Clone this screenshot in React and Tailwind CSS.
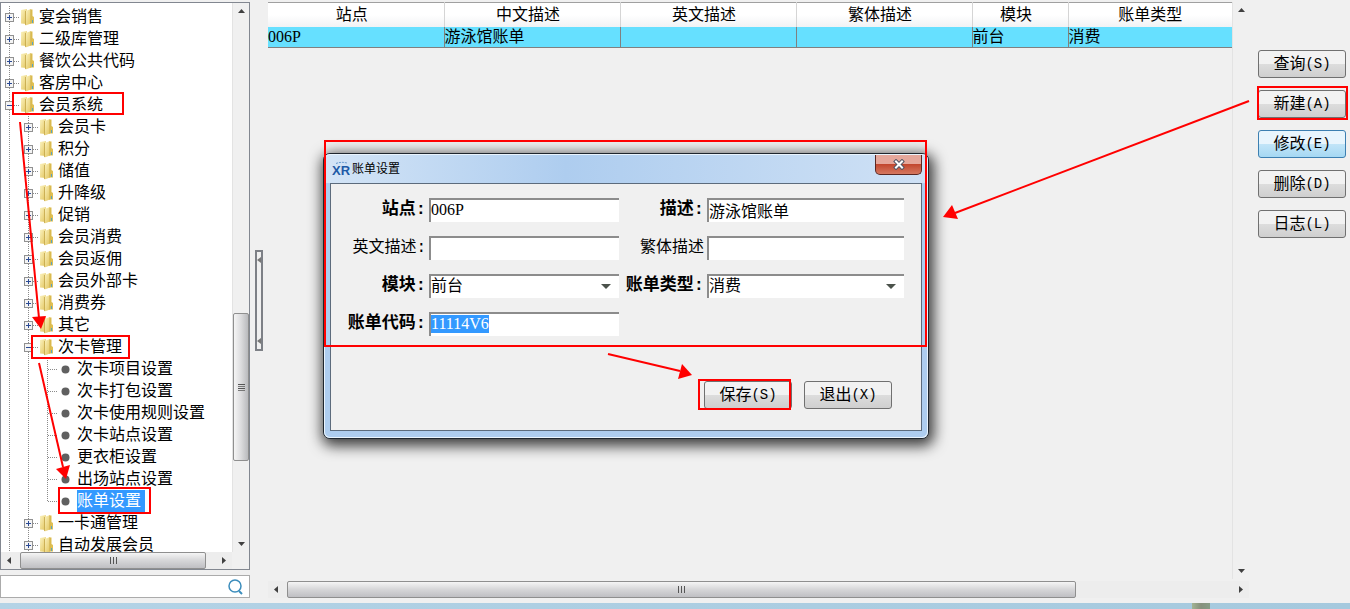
import { useEffect, useRef, useState } from "react";

const treeItems = [
  { level: 0, label: "宴会销售" },
  { level: 0, label: "二级库管理" },
  { level: 0, label: "餐饮公共代码" },
  { level: 0, label: "客房中心" },
  { level: 0, label: "会员系统", open: true },
  { level: 1, label: "会员卡" },
  { level: 1, label: "积分" },
  { level: 1, label: "储值" },
  { level: 1, label: "升降级" },
  { level: 1, label: "促销" },
  { level: 1, label: "会员消费" },
  { level: 1, label: "会员返佣" },
  { level: 1, label: "会员外部卡" },
  { level: 1, label: "消费券" },
  { level: 1, label: "其它" },
  { level: 1, label: "次卡管理", open: true },
  { level: 2, label: "次卡项目设置" },
  { level: 2, label: "次卡打包设置" },
  { level: 2, label: "次卡使用规则设置" },
  { level: 2, label: "次卡站点设置" },
  { level: 2, label: "更衣柜设置" },
  { level: 2, label: "出场站点设置" },
  { level: 2, label: "账单设置", last: true },
  { level: 1, label: "一卡通管理" },
  { level: 1, label: "自动发展会员" },
];

const columns = [
  { title: "站点", value: "006P", width: "w-[176px]" },
  { title: "中文描述", value: "游泳馆账单", width: "w-[176px]" },
  { title: "英文描述", value: "", width: "w-[176px]" },
  { title: "繁体描述", value: "", width: "w-[176px]" },
  { title: "模块", value: "前台", width: "w-[96px]" },
  { title: "账单类型", value: "消费", width: "" },
];

const actions = [
  { label: "查询", hotkey: "S" },
  { label: "新建", hotkey: "A" },
  { label: "修改", hotkey: "E", active: true },
  { label: "删除", hotkey: "D" },
  { label: "日志", hotkey: "L" },
];

function Guide({ type, last }) {
  return (
    <svg width="19" height="22" className="shrink-0" shapeRendering="crispEdges">
      <path
        d={last ? "M8.5 0V11" : "M8.5 0V22"}
        stroke="#8a8a8a"
        strokeDasharray="1 1"
      />
      {type !== "line" && (
        <path d="M9 11.5H19" stroke="#8a8a8a" strokeDasharray="1 1" />
      )}
      {(type === "plus" || type === "minus") && (
        <>
          <rect x="4.5" y="7.5" width="8" height="8" fill="#f4f4f4" stroke="#919191" />
          <path
            d={type === "plus" ? "M6 11.5H11M8.5 9V14" : "M6 11.5H11"}
            stroke="#2b4a94"
          />
        </>
      )}
    </svg>
  );
}

function FolderIcon() {
  return (
    <svg width="19" height="22" className="shrink-0">
      <defs>
        <linearGradient id="folder-front" x1="0" x2="1" y1="0" y2="1">
          <stop offset="0" stopColor="#fbf3c0" />
          <stop offset="1" stopColor="#e2c45c" />
        </linearGradient>
      </defs>
      <path d="M1 4L7 3V18L1 17.500Z" fill="url(#folder-front)" />
      <path d="M10 3.500H12.500V10L14 11V17.500H10Z" fill="#dfbf52" />
      <path d="M5.500 5L11 3V17.500L5.500 19.500Z" fill="url(#folder-front)" />
      <path d="M5.500 5V19" stroke="#c3a545" strokeWidth="0.800" />
      <path d="M10.800 3.500V17.500" stroke="#cdae4a" strokeWidth="0.800" />
      <rect x="12" y="14" width="1" height="3" fill="#58a5c4" />
    </svg>
  );
}

function TreeRow({ item, selected, onSelect }) {
  return (
    <li className="flex h-[22px] items-center">
      {item.level > 0 && <Guide type="line" />}
      {item.level > 1 && <Guide type="line" />}
      {item.level === 2 ? (
        <Guide type="leaf" last={item.last} />
      ) : (
        <Guide type={item.open ? "minus" : "plus"} />
      )}
      {item.level === 2 ? (
        <svg width="19" height="22" className="shrink-0">
          <circle cx="7.500" cy="11.500" r="4" fill="#606060" />
        </svg>
      ) : (
        <FolderIcon />
      )}
      <button
        type="button"
        onClick={onSelect}
        className={`h-[22px] shrink-0 whitespace-nowrap text-base leading-[22px] ${
          selected ? "bg-[#3399ff] pr-1 text-white" : "text-black"
        }`}
      >
        {item.label}
      </button>
    </li>
  );
}

function Arrow({ dir }) {
  const shapes = {
    up: "M5 10L8.500 6L12 10Z",
    down: "M5 7L8.500 11L12 7Z",
    left: "M10 5L6 8.500L10 12Z",
    right: "M7 5L11 8.500L7 12Z",
  };
  return (
    <svg width="17" height="17" className="shrink-0">
      <path d={shapes[dir]} fill="#404040" />
    </svg>
  );
}

function VerticalScroll({ thumb }) {
  return (
    <div className="flex w-[17px] shrink-0 flex-col items-stretch border-l border-[#e3e3e3] bg-[#f0f0f0]">
      <Arrow dir="up" />
      <div className="grow-[294] basis-0" />
      {thumb && (
        <div className="flex grow-[147] basis-0 flex-col items-center justify-center gap-px rounded-xs border border-[#8f8f8f] bg-linear-to-r from-[#f5f5f5] via-[#dcdcde] to-[#b9babd]">
          <div className="h-px w-[7px] bg-[#555]" />
          <div className="h-px w-[7px] bg-[#777]" />
          <div className="h-px w-[7px] bg-[#555]" />
          <div className="h-px w-[7px] bg-[#777]" />
        </div>
      )}
      <div className="grow-[74] basis-0" />
      <Arrow dir="down" />
    </div>
  );
}

function HorizontalScroll({ grow, rest }) {
  return (
    <div className="flex h-[17px] shrink-0 items-stretch bg-[#ededed]">
      <Arrow dir="left" />
      <div className="w-0.5" />
      <div
        className={`flex basis-0 items-center justify-center gap-0.5 rounded-xs border border-[#8f8f8f] bg-linear-to-b from-[#f5f5f5] via-[#d6d6d8] to-[#bfbfc3] ${grow}`}
      >
        <div className="h-[7px] w-px bg-[#555]" />
        <div className="h-[7px] w-px bg-[#555]" />
        <div className="h-[7px] w-px bg-[#555]" />
      </div>
      <div className={`basis-0 ${rest}`} />
      <Arrow dir="right" />
    </div>
  );
}

function PushButton({ label, hotkey, active, onClick }) {
  return (
    <button
      type="button"
      onClick={onClick}
      className={`flex h-7 w-[88px] items-center justify-center rounded-[3px] border text-base leading-none ${
        active
          ? "border-[#3c7fb1] bg-linear-to-b from-[#e8f5fd] from-50% via-[#c2e5f8] via-50% to-[#a5d8f3]"
          : "border-[#707070] bg-linear-to-b from-[#f2f2f2] from-50% via-[#dddddd] via-50% to-[#cfcfcf]"
      }`}
    >
      {label}
      <span className="font-['Liberation_Mono',monospace] text-sm leading-none">({hotkey})</span>
    </button>
  );
}

const labelClass =
  "text-right font-['Liberation_Mono','Noto_Sans_CJK_SC',monospace] leading-6 whitespace-nowrap";

const inputClass =
  "h-6 w-full appearance-none rounded-none border-t-2 border-l-2 border-t-[#8c8c8c] border-l-[#8c8c8c] bg-white pb-0.5 text-base leading-5 text-black outline-none selection:bg-[#3399ff] selection:text-white";

function Field({ id, label, bold, value, inputRef }) {
  return (
    <>
      <label htmlFor={id} className={`${labelClass} ${bold ? "text-[17px] font-bold" : "text-base"}`}>
        {label}
      </label>
      <input id={id} ref={inputRef} defaultValue={value} className={inputClass} />
    </>
  );
}

function SelectField({ id, label, value }) {
  return (
    <>
      <label htmlFor={id} className={`${labelClass} text-[17px] font-bold`}>
        {label}
      </label>
      <div className="relative">
        <select id={id} defaultValue={value} className={inputClass}>
          <option>{value}</option>
        </select>
        <svg width="10" height="6" className="pointer-events-none absolute top-2.5 right-2">
          <path d="M0 0H10L5 5Z" fill="#4b524b" />
        </svg>
      </div>
    </>
  );
}

function BillDialog() {
  const codeRef = useRef(null);

  useEffect(() => {
    codeRef.current.focus();
    codeRef.current.select();
  }, []);

  return (
    <div
      role="dialog"
      aria-labelledby="dialog-title"
      className="absolute top-[153px] left-[323px] w-[606px] rounded-[7px] border border-[#1f262e] bg-[#aecdef] shadow-[2px_4px_14px_3px_rgba(0,0,0,0.75)]"
    >
      <div className="flex h-[29px] items-center rounded-t-md border-x border-t border-[#eaf4fd] bg-linear-to-r from-[#d3e4f6] via-[#aecdef] via-40% to-[#cfe1f5] px-[5px]">
        <svg width="18" height="18" className="ml-0.5 shrink-0">
          <text
            x="0"
            y="15"
            fontFamily="Liberation Sans, sans-serif"
            fontSize="13"
            fontWeight="bold"
            fill="#1d5aa6"
          >
            XR
          </text>
          <path d="M4 3.500Q9 1.500 15 3" stroke="#5d93cb" strokeDasharray="2 1" fill="none" />
        </svg>
        <h1 id="dialog-title" className="ml-0.5 flex-1 text-xs">
          账单设置
        </h1>
        <button
          type="button"
          aria-label="关闭"
          className="flex h-5 w-[47px] items-center justify-center self-start rounded-b-[5px] border border-t-0 border-[#5b2722] bg-linear-to-b from-[#e5a79b] from-45% via-[#c2472f] via-50% to-[#d5775f]"
        >
          <svg width="12" height="11">
            <path d="M3 2.500L9 8.500M9 2.500L3 8.500" stroke="#535666" strokeWidth="4" strokeLinecap="square" />
            <path d="M3 2.500L9 8.500M9 2.500L3 8.500" stroke="#fff" strokeWidth="2" strokeLinecap="square" />
          </svg>
        </button>
      </div>

      <div className="rounded-b-md border-x border-b border-[#eaf4fd] px-[5px] pb-1.5">
        <div className="border border-[#5c6b7c] bg-[#f0f0f0] pt-3.5 pb-[21px]">
          <form className="grid grid-cols-[95px_190px_82px_197px] gap-x-[3px] gap-y-3.5">
            <Field id="site" label="站点:" bold value="006P" />
            <Field id="desc" label="描述:" bold value="游泳馆账单" />
            <Field id="desc-en" label="英文描述:" value="" />
            <Field id="desc-tw" label="繁体描述" value="" />
            <SelectField id="module" label="模块:" value="前台" />
            <SelectField id="type" label="账单类型:" value="消费" />
            <Field id="code" label="账单代码:" bold value="11114V6" inputRef={codeRef} />
          </form>
          <div className="mt-[45px] mr-[29px] flex justify-end gap-3">
            <PushButton label="保存" hotkey="S" />
            <PushButton label="退出" hotkey="X" />
          </div>
        </div>
      </div>
    </div>
  );
}

// Red boxes and arrows that walk the reader through the steps
function Annotations() {
  return (
    <svg className="pointer-events-none absolute inset-0 h-full w-full">
      <g fill="none" stroke="#ff0000" strokeWidth="2">
        <rect x="13" y="93" width="110" height="21" />
        <rect x="32" y="336" width="97" height="22" />
        <rect x="59" y="488" width="91" height="25" />
        <rect x="325" y="141" width="601" height="205" />
        <rect x="699" y="380" width="91" height="29" />
        <rect x="1258" y="87" width="89" height="32" />
        <path d="M20 122L39 318" />
        <path d="M39 363L63 467" />
        <path d="M1249 101L955 213" />
        <path d="M608 354L680 371" />
      </g>
      <g fill="#ff0000">
        <path d="M32 317L46 316L41 329Z" />
        <path d="M56 469L70 465L66 479Z" />
        <path d="M943 217L952 205L958 219Z" />
        <path d="M692 375L682 364L678 379Z" />
      </g>
    </svg>
  );
}

export default function App() {
  const [selected, setSelected] = useState("账单设置");

  return (
    <div className="relative flex h-screen flex-col overflow-hidden bg-[#f0f0f0] font-['Liberation_Serif','Noto_Sans_CJK_SC',sans-serif] text-base text-black">
      <div className="flex min-h-0 flex-1 pt-0.5 pb-[5px]">
        {/* Navigation tree */}
        <aside className="flex w-[250px] shrink-0 flex-col gap-[5px]">
          <div className="flex min-h-0 flex-1 flex-col border border-[#828790] bg-white">
            <div className="flex min-h-0 flex-1">
              <ul className="min-w-0 flex-1 overflow-hidden pt-[3px]">
                {treeItems.map((item) => (
                  <TreeRow
                    key={item.label}
                    item={item}
                    selected={selected === item.label}
                    onSelect={() => setSelected(item.label)}
                  />
                ))}
              </ul>
              <VerticalScroll thumb />
            </div>
            <div className="flex bg-[#f0f0f0]">
              <div className="flex-1">
                <HorizontalScroll grow="grow-[187]" rest="grow-[9]" />
              </div>
              <div className="w-[17px]" />
            </div>
          </div>
          <div className="flex h-[23px] items-center border border-[#ababab] bg-white pr-1">
            <input aria-label="搜索" className="h-full min-w-0 flex-1 px-1 outline-none" />
            <svg width="18" height="18" fill="none" stroke="#3c8dbc">
              <circle cx="8" cy="8" r="6" strokeWidth="1.500" />
              <path d="M12 13L15 16" strokeWidth="2" />
            </svg>
          </div>
        </aside>

        {/* Splitter */}
        <div className="ml-[5px] flex h-[101px] w-2 shrink-0 flex-col items-center justify-between self-center border-2 border-[#7d8086] bg-[#f0f0f0] py-1">
          <svg width="4" height="8">
            <path d="M4 1V7L0 4Z" fill="#777" />
          </svg>
          <svg width="4" height="8">
            <path d="M4 1V7L0 4Z" fill="#777" />
          </svg>
        </div>

        {/* Bill list */}
        <main className="ml-[5px] flex min-w-0 flex-1 flex-col gap-0.5">
          <div className="flex min-h-0 flex-1">
            <div className="min-w-0 flex-1">
              <table className="w-full table-fixed border-collapse">
                <thead>
                  <tr className="h-6 bg-linear-to-b from-white from-50% to-[#f1f2f4]">
                    {columns.map((col) => (
                      <th
                        key={col.title}
                        className={`border-t border-r border-t-[#a0a0a0] border-r-[#d5d5d5] py-0 pr-2 pl-0 text-base leading-[22px] font-normal last:border-r-0 last:pr-0 ${col.width}`}
                      >
                        {col.title}
                      </th>
                    ))}
                  </tr>
                </thead>
                <tbody>
                  <tr className="h-5 border-b border-[#808080] bg-[#66e0ff]">
                    {columns.map((col) => (
                      <td
                        key={col.title}
                        className="border-r border-[#808080] p-0 leading-5 whitespace-nowrap last:border-r-0"
                      >
                        {col.value}
                      </td>
                    ))}
                  </tr>
                </tbody>
              </table>
            </div>
            <VerticalScroll />
          </div>
          <HorizontalScroll grow="grow-[789]" rest="grow-[156]" />
        </main>

        {/* Actions */}
        <div className="mr-1 ml-[9px] flex shrink-0 flex-col gap-3 pt-12">
          {actions.map((a) => (
            <PushButton key={a.label} {...a} />
          ))}
        </div>
      </div>

      <div className="flex h-1.5 shrink-0 justify-end bg-linear-to-r from-[#b4d3e6] to-[#a5c9de] pr-[140px]">
        <div className="w-[18px] bg-linear-to-r from-[#a3b493] via-[#86907d] to-[#869c86]" />
      </div>

      <BillDialog />
      <Annotations />
    </div>
  );
}
